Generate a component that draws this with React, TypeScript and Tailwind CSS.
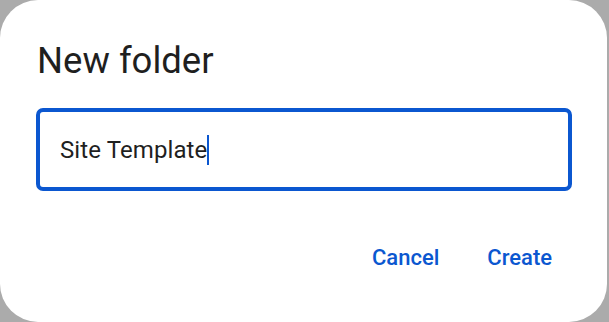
import React from "react";

export default function App() {
  return (
    <div className="w-[609px] h-[322px] bg-[#ababab] overflow-hidden" style={{ fontFamily: "Roboto, 'Noto Sans', sans-serif" }}>
      <div className="w-[607px] h-[322px] bg-white rounded-[38px] pt-[39px] pl-[36px] pr-[35px] flex flex-col">
        <div className="text-[36.5px] leading-[44px] text-[#1f1f1f] pl-[1px]">New folder</div>
        <div className="mt-[25px] h-[83px] border-[4px] border-[#0b57d0] rounded-[7px] flex items-center pl-[20px]">
          <span className="text-[24px] leading-[32px] text-[#1f1f1f] tracking-[0.1px]">Site Template</span>
          <span className="w-[2px] h-[30px] bg-[#0b57d0]" />
        </div>
        <div className="mt-[53px] flex justify-end gap-[48px] pr-[20px] text-[22px] leading-[28px] font-medium text-[#0b57d0]">
          <span>Cancel</span>
          <span>Create</span>
        </div>
      </div>
    </div>
  );
}
